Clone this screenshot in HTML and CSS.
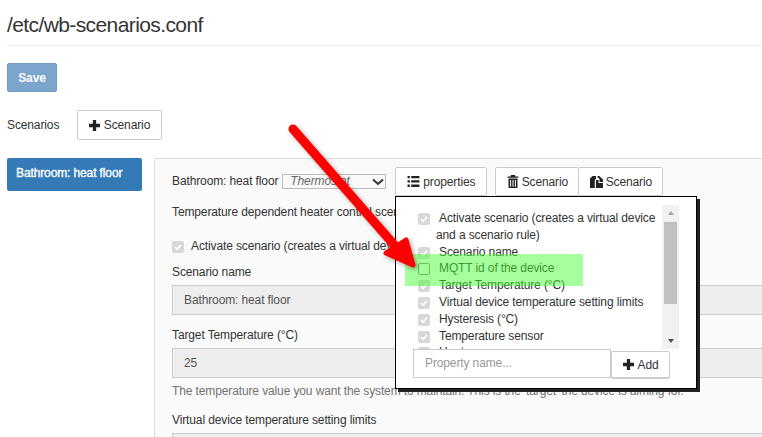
FILE: index.html
```html
<!DOCTYPE html>
<html lang="en">
<head>
    <meta charset="UTF-8">
    <title>/etc/wb-scenarios.conf</title>
    <link rel="stylesheet" href="styles.css">
</head>
<body>

<svg class="defs" width="0" height="0">
    <symbol id="plus" viewBox="0 0 12 12"><path d="M4.2 0h3.6v4.2H12v3.6H7.8V12H4.2V7.8H0V4.2h4.2z"/></symbol>
    <symbol id="tick" viewBox="0 0 12 12"><path d="M2.5 6.2l2.6 2.6 4.5-5.4" fill="none" stroke="#fff" stroke-width="2"/></symbol>
</svg>

<h1 class="title">/etc/wb-scenarios.conf</h1>

<button class="btn btn-save">Save</button>

<div class="scenarios-row">
    <span class="scenarios-label">Scenarios</span>
    <button class="btn btn-new"><svg class="ico"><use href="#plus"/></svg> Scenario</button>
</div>

<div class="main">
    <div class="tab">Bathroom: heat floor</div>

    <div class="panel">
        <div class="toolbar">
            <span>Bathroom: heat floor</span>
            <div class="type-select">
                <i>Thermostat</i>
                <svg width="12" height="8" viewBox="0 0 12 8"><path d="M1 1.500l5 4.500 5-4.500" fill="none" stroke="#333" stroke-width="2"/></svg>
            </div>
            <button class="btn btn-tool">
                <svg class="ico ico-list" viewBox="0 0 13 12"><path d="M0 0h2.500v2.500H0zM4 0h9v2.500H4zM0 4.700h2.500v2.500H0zM4 4.700h9v2.500H4zM0 9.400h2.500v2.500H0zM4 9.400h9v2.500H4z"/></svg> properties
            </button>
            <div class="btn-group">
                <button class="btn btn-tool">
                    <svg class="ico ico-tall" viewBox="0 0 11 13"><path d="M3.500 0h4l.6 1.600H11v1.200H0V1.600h2.900zM1 3.600h9V13H1zM2.600 5v6.800h1V5zM5 5v6.800h1V5zM7.400 5v6.800h1V5z" fill-rule="evenodd"/></svg> Scenario
                </button>
                <button class="btn btn-tool">
                    <svg class="ico ico-copy" viewBox="0 0 13 12"><path d="M0 2.500L2.500 0H6v2.800L4.800 4v8H0zM6 4h2.500v3H13v5H6zM7.500 0h1.700L13 3.500V6H9.500V2.800L7.500 1.500z"/></svg> Scenario
                </button>
            </div>
        </div>

        <p class="intro">Temperature dependent heater control scenario</p>

        <div class="activate">
            <span class="cb on"><svg><use href="#tick"/></svg></span>
            Activate scenario (creates a virtual device and a scenario rule)
        </div>

        <label class="field-label">Scenario name</label>
        <div class="field">Bathroom: heat floor</div>

        <label class="field-label second">Target Temperature (°C)</label>
        <div class="field">25</div>
        <p class="help">The temperature value you want the system to maintain. This is the 'target' the device is aiming for.</p>

        <label class="field-label limits">Virtual device temperature setting limits</label>
        <div class="field"></div>
    </div>
</div>

<!-- список свойств поверх панели -->
<div class="popup">
    <div class="popup-top">
        <ul class="prop-list">
            <li class="first"><span class="cb on"><svg><use href="#tick"/></svg></span>Activate scenario (creates a virtual device and a scenario rule)</li>
            <li><span class="cb on"><svg><use href="#tick"/></svg></span>Scenario name</li>
            <li><span class="cb"></span>MQTT id of the device</li>
            <li><span class="cb on"><svg><use href="#tick"/></svg></span>Target Temperature (°C)</li>
            <li><span class="cb on"><svg><use href="#tick"/></svg></span>Virtual device temperature setting limits</li>
            <li><span class="cb on"><svg><use href="#tick"/></svg></span>Hysteresis (°C)</li>
            <li><span class="cb on"><svg><use href="#tick"/></svg></span>Temperature sensor</li>
            <li><span class="cb on"><svg><use href="#tick"/></svg></span>Heater</li>
        </ul>
        <div class="scrollbar">
            <span class="arrow-up"></span>
            <span class="thumb"></span>
            <span class="arrow-down"></span>
        </div>
    </div>
    <div class="add-row">
        <div class="prop-input">Property name...</div>
        <button class="btn btn-add"><svg class="ico"><use href="#plus"/></svg> Add</button>
    </div>
</div>

<div class="highlight"></div>

<svg class="arrow" width="140" height="160" viewBox="0 0 140 160">
    <defs>
        <filter id="soft" x="-20%" y="-20%" width="140%" height="140%">
            <feDropShadow dx="2" dy="2" stdDeviation="2" flood-color="#000" flood-opacity="0.35"/>
        </filter>
    </defs>
    <g filter="url(#soft)">
        <path d="M5 7L108 125" stroke="#f00" stroke-width="9" stroke-linecap="round"/>
        <path d="M125 143L98 131 L118 118z" fill="#f00" stroke="#f00" stroke-width="5" stroke-linejoin="round"/>
    </g>
</svg>

</body>
</html>
```

FILE: styles.css
```css
html, body {
    height: 100%;
    overflow: hidden;
}
body {
    margin: 0;
    padding: 0 0 0 7px;
    position: relative;
    font-family: "Liberation Sans", Arial, sans-serif;
    font-size: 12px;
    line-height: 17px;
    letter-spacing: -0.12px;
    color: #333;
    background-color: #fff;
}
.defs {
    position: absolute;
}
.title {
    margin: 0 0 17px;
    padding: 13px 0 9px;
    height: 23px;
    font-size: 21px;
    font-weight: normal;
    line-height: 23px;
    letter-spacing: -0.6px;
    border-bottom: 1px solid #eee;
}
.btn {
    display: inline-flex;
    align-items: center;
    justify-content: center;
    gap: 4px;
    padding: 0 12px;
    height: 30px;
    font-family: inherit;
    font-size: 12px;
    letter-spacing: inherit;
    color: #333;
    background-color: #fff;
    border: 1px solid #ccc;
    border-radius: 2px;
}
.ico {
    flex: none;
    width: 11px;
    height: 11px;
    fill: #222;
}
.ico-list {
    width: 13px;
}
.ico-tall {
    height: 13px;
    width: 12px;
}
.ico-copy {
    width: 13px;
    height: 12px;
}
.btn-save {
    display: flex;
    width: 50px;
    height: 29px;
    padding: 0;
    font-weight: bold;
    color: #fff;
    background-color: #7ba5cd;
    border-color: #6f9ac4;
}
.scenarios-row {
    display: flex;
    align-items: center;
    margin-top: 18px;
}
.scenarios-label {
    width: 70px;
}
.btn-new {
    width: 85px;
    padding: 0;
}
.main {
    display: flex;
    align-items: flex-start;
    gap: 12px;
    margin-top: 18px;
}
.tab {
    flex: none;
    width: 135px;
    height: 33px;
    padding: 7px 0 0 9px;
    box-sizing: border-box;
    color: #fff;
    -webkit-text-stroke: 0.35px #fff;
    background-color: #337ab7;
    border-radius: 2px;
}
.panel {
    flex: none;
    width: 800px;
    height: 300px;
    padding: 8px 17px;
    box-sizing: border-box;
    background-color: #fafafa;
    border: 1px solid #ddd;
}
.toolbar {
    display: flex;
    align-items: center;
    gap: 4px;
    height: 29px;
}
.type-select {
    display: flex;
    align-items: center;
    justify-content: space-between;
    width: 104px;
    height: 15px;
    padding: 0 1px 0 7px;
    box-sizing: border-box;
    color: #666;
    border: 1px solid #bbb;
}
.btn-tool {
    width: 84px;
    height: 29px;
    padding: 0;
    gap: 3px;
}
.toolbar > .btn-tool {
    width: 92px;
    margin-left: 5px;
    margin-right: 4px;
}
.btn-group {
    display: flex;
}
.btn-group .btn-tool + .btn-tool {
    margin-left: -1px;
    width: 85px;
}
.intro {
    margin: 8px 0 0;
}
.activate {
    display: flex;
    align-items: center;
    margin-top: 17px;
    white-space: nowrap;
}
.cb {
    flex: none;
    display: inline-block;
    box-sizing: border-box;
    width: 12px;
    height: 12px;
    margin-right: 7px;
    background-color: #fff;
    border: 1px solid #888;
    border-radius: 2px;
}
.cb.on {
    background-color: #d8d8d8;
    border-color: #d8d8d8;
}
.cb svg {
    display: block;
    width: 10px;
    height: 10px;
}
.field-label {
    display: block;
    margin-top: 9px;
    height: 17px;
}
.field-label.second {
    margin-top: 12px;
}
.field {
    height: 28px;
    margin-top: 4px;
    padding: 0 11px;
    line-height: 29px;
    color: #555;
    background-color: #eee;
    border: 1px solid #ccc;
}
.help {
    margin: 5px 0 0;
    color: #737373;
    white-space: nowrap;
}
.field-label.limits {
    margin-top: 12px;
}
.popup {
    position: absolute;
    left: 395px;
    top: 196px;
    width: 302px;
    height: 193px;
    padding: 8px 17px 0;
    box-sizing: border-box;
    background-color: #fff;
    border: 1px solid #000;
    box-shadow: 3px 3px 0 #222;
}
.popup-top {
    display: flex;
    height: 144px;
}
.prop-list {
    flex: none;
    width: 244px;
    margin: 0;
    padding: 0 0 0 5px;
    overflow: hidden;
    list-style: none;
    line-height: 16.8px;
}
.prop-list li {
    position: relative;
    height: 16.8px;
    padding-left: 21px;
    white-space: nowrap;
}
.prop-list li.first {
    height: auto;
    margin-top: 5px;
    padding-left: 18px;
    text-indent: 3px;
    white-space: normal;
}
.prop-list .cb {
    position: absolute;
    left: 0;
    top: 3px;
    margin: 0;
}
.scrollbar {
    flex: none;
    display: flex;
    flex-direction: column;
    align-items: center;
    justify-content: space-between;
    width: 17px;
    background-color: #f1f1f1;
}
.thumb {
    flex: none;
    width: 13px;
    height: 82px;
    margin: 1px 0 29px;
    background-color: #c1c1c1;
}
.arrow-up, .arrow-down {
    width: 0;
    height: 0;
    margin: 6px 0;
    border-left: 3.5px solid transparent;
    border-right: 3.5px solid transparent;
}
.arrow-up {
    border-bottom: 4px solid #a3a3a3;
}
.arrow-down {
    border-top: 4px solid #505050;
}
.add-row {
    display: flex;
    align-items: flex-start;
}
.prop-input {
    width: 198px;
    height: 29px;
    padding: 0 11px;
    box-sizing: border-box;
    line-height: 27px;
    color: #999;
    background-color: #fff;
    border: 1px solid #ccc;
}
.btn-add {
    width: 59px;
    height: 28px;
    margin-top: 2px;
    padding: 0;
    border-bottom-width: 2px;
}
.highlight {
    position: absolute;
    left: 405px;
    top: 254px;
    width: 178px;
    height: 32px;
    background-color: rgba(70, 255, 50, 0.48);
}
.arrow {
    position: absolute;
    left: 288px;
    top: 122px;
    pointer-events: none;
}
```
